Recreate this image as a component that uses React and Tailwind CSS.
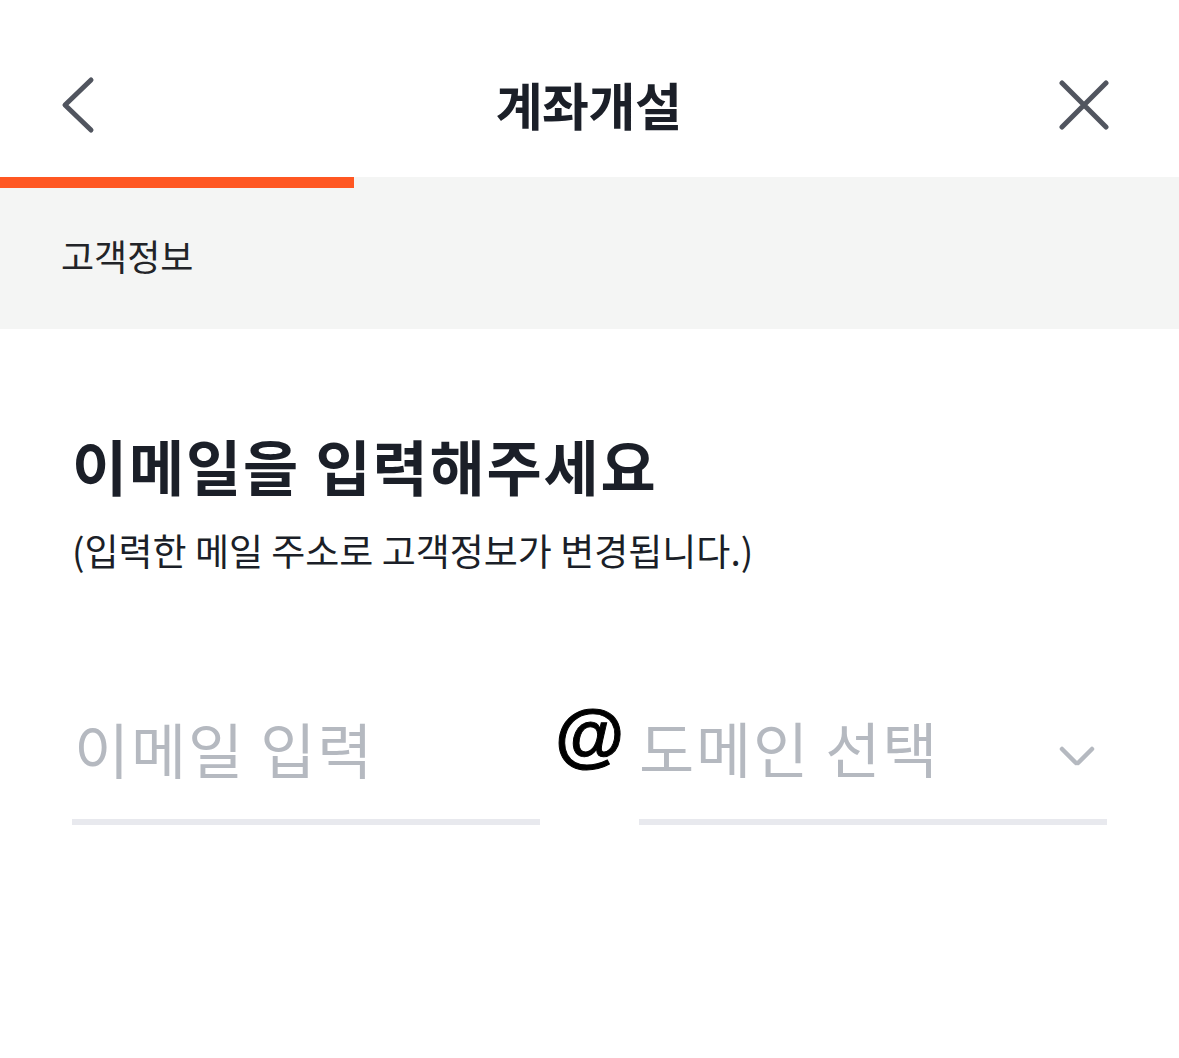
import React, { useState } from 'react';

const font = { fontFamily: '"Noto Sans CJK KR", "Noto Sans", sans-serif' };

const BackIcon = () => (
  <svg width="40" height="60" viewBox="0 0 40 60" fill="none">
    <path d="M33 5 L7 30 L33 55" stroke="#51555f" strokeWidth="5" strokeLinecap="round" strokeLinejoin="round" />
  </svg>
);

const CloseIcon = () => (
  <svg width="50" height="50" viewBox="0 0 50 50" fill="none">
    <path d="M3 3 L47 47 M47 3 L3 47" stroke="#51555f" strokeWidth="5" strokeLinecap="round" />
  </svg>
);

const ChevronDown = () => (
  <svg width="36" height="24" viewBox="0 0 36 24" fill="none">
    <path d="M3 4 L17 18 M19 18 L33 4" stroke="#b5b9c0" strokeWidth="4.5" strokeLinecap="round" />
  </svg>
);

export default function App() {
  const [email, setEmail] = useState('');

  return (
    <div className="w-[1179px] h-[1058px] bg-white" style={font}>
      {/* 헤더 */}
      <div className="flex h-[177px] items-center px-[58px] pt-[32px]">
        <div className="flex flex-1 justify-start">
          <BackIcon />
        </div>
        <h1 className="pl-[10px] text-[51px] font-bold text-[#1b1f28] tracking-[-0.01em]">계좌개설</h1>
        <div className="flex flex-1 justify-end pr-[12px]">
          <CloseIcon />
        </div>
      </div>

      {/* 진행 단계 */}
      <div className="bg-[#f4f5f4] h-[152px]">
        <div className="h-[11px] w-[354px] bg-[#ff5722]" />
        <div className="pl-[61px] pt-[40px] text-[36px] text-[#222428]">고객정보</div>
      </div>

      {/* 본문 */}
      <div className="px-[72px] pt-[106px]">
        <h2 className="text-[60px] font-bold leading-none text-[#1b1f28] tracking-[0.03em]">
          이메일을 입력해주세요
        </h2>
        <p className="mt-[37px] text-[37px] leading-none text-[#1b1f28]">
          (입력한 메일 주소로 고객정보가 변경됩니다.)
        </p>

        <div className="mt-[130px] flex items-start">
          <div className="w-[468px]">
            <input
              value={email}
              onChange={(e) => setEmail(e.target.value)}
              placeholder="이메일 입력"
              className="h-[96px] w-full bg-transparent pl-[2px] text-[60px] text-[#1b1f28] tracking-[0.03em] placeholder:text-[#b5b9c0] outline-none"
            />
            <div className="mt-[24px] h-[6px] bg-[#e8e9ee]" />
          </div>
          <div
            className="w-[99px] pl-[15px] text-[71px] font-bold leading-none text-black [-webkit-text-stroke:1px_black]"
            style={{ fontFamily: '"Liberation Sans", Arial, sans-serif' }}
          >
            @
          </div>
          <div className="w-[468px]">
            <div className="flex h-[96px] items-center justify-between">
              <span className="text-[60px] text-[#b5b9c0] tracking-[0.03em]">도메인 선택</span>
              <span className="pr-[12px] pt-[20px]"><ChevronDown /></span>
            </div>
            <div className="mt-[24px] h-[6px] bg-[#e8e9ee]" />
          </div>
        </div>
      </div>
    </div>
  );
}
